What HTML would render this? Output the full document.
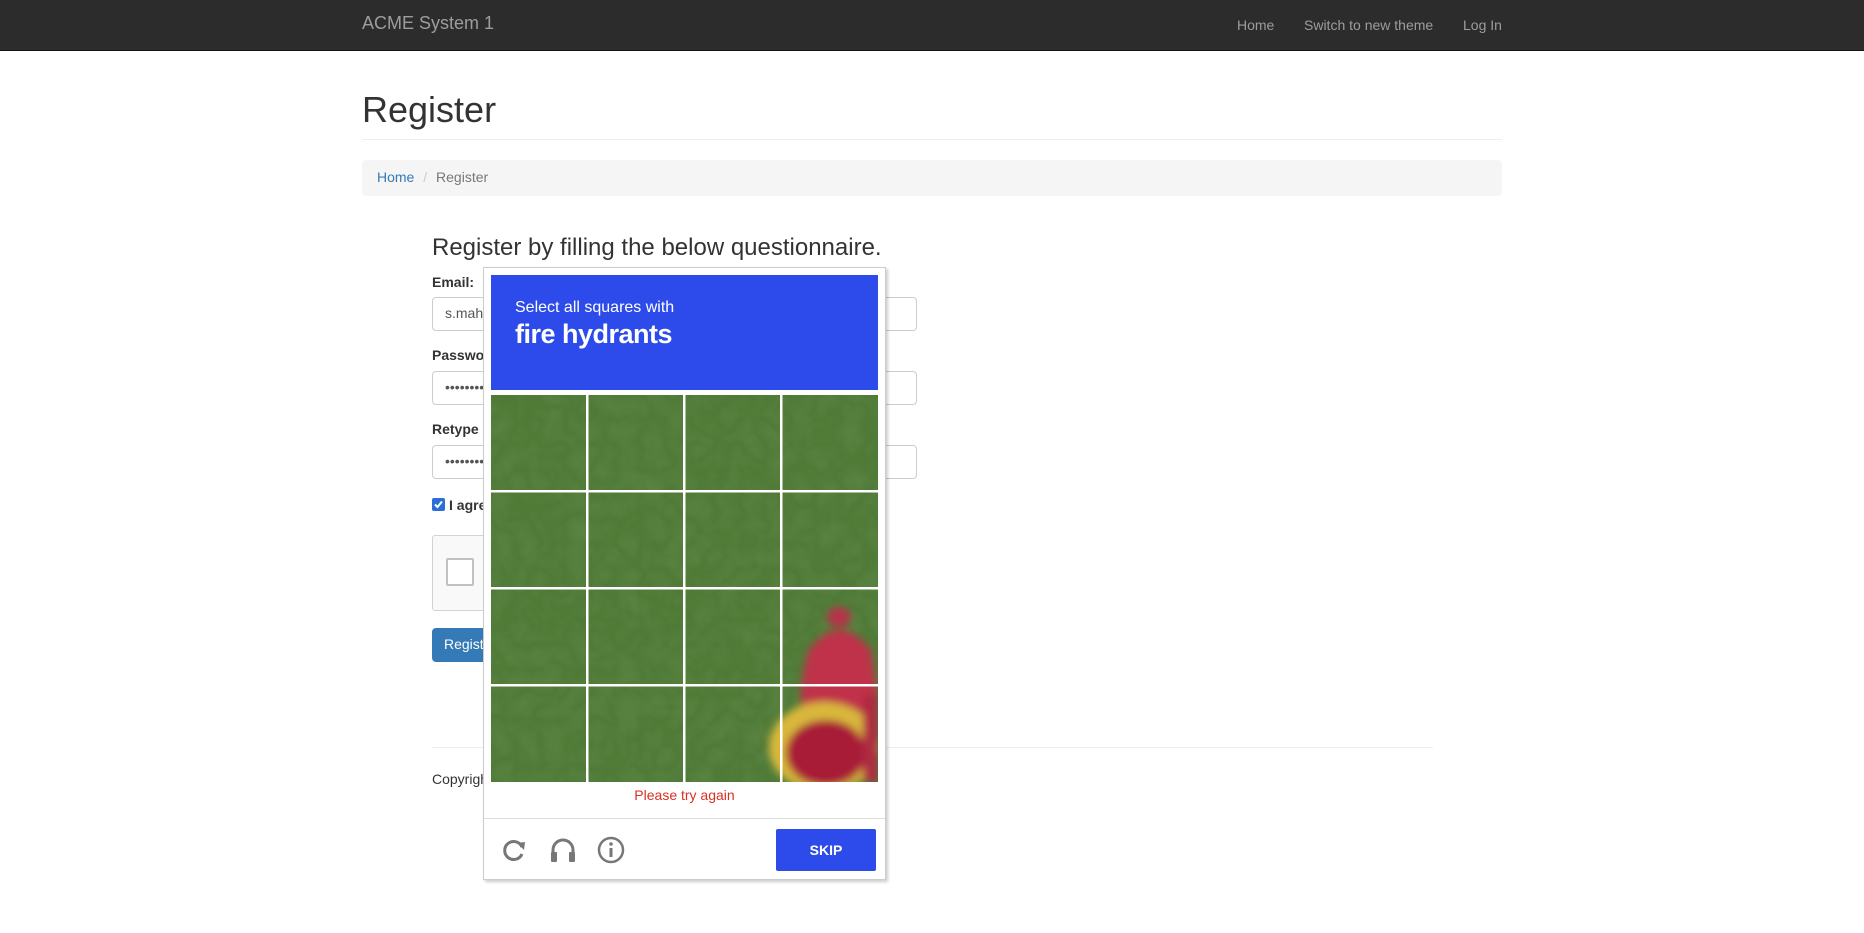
<!DOCTYPE html>
<html><head><meta charset="utf-8"><style>
*{box-sizing:border-box}
body{margin:0;font-family:"Liberation Sans",sans-serif;font-size:14px;color:#333;background:#fff;width:1864px;height:933px;overflow:hidden;position:relative}
.nav{height:51px;background:#2c2c2c;border-bottom:1px solid #111;position:relative}
.brand{position:absolute;left:362px;top:13px;font-size:18px;color:#9d9d9d}
.nl{position:absolute;top:17px;font-size:14px;color:#9d9d9d}
h1{position:absolute;left:362px;top:89px;margin:0;font-size:36px;font-weight:400;color:#333}
.hr1{position:absolute;left:362px;width:1140px;top:139px;border-top:1px solid #eee}
.bc{position:absolute;left:362px;width:1140px;top:160px;height:36px;background:#f5f5f5;border-radius:4px;padding:9px 15px;color:#777}
.bc a{color:#337ab7}
.h3{position:absolute;left:432px;top:234px;font-size:24px;color:#333}
.lbl{position:absolute;left:432px;font-weight:bold}
.inp{position:absolute;left:432px;width:485px;height:34px;border:1px solid #ccc;border-radius:4px;padding:7px 12px;color:#555}
.cb{position:absolute;left:432px;top:498px;width:13px;height:13px;background:#2a6fd6;border-radius:2px}
.rc{position:absolute;left:432px;top:535px;width:304px;height:76px;background:#f9f9f9;border:1px solid #d3d3d3;border-radius:3px}
.rc i{position:absolute;left:13px;top:22px;width:28px;height:28px;border:2px solid #c1c1c1;background:#fff;border-radius:2px}
.btn{position:absolute;left:432px;top:628px;width:90px;height:34px;background:#337ab7;border-radius:4px;color:#fff;padding:8px 12px}
.hr2{position:absolute;left:432px;width:1001px;top:747px;border-top:1px solid #eee}
.copy{position:absolute;left:432px;top:771px}
.pop{position:absolute;left:483px;top:267px;width:403px;height:613px;background:#fff;border:1px solid #ccc;box-shadow:2px 2px 3px rgba(0,0,0,.2)}
.hd{position:absolute;left:7px;top:7px;width:387px;height:115px;background:#2c4bea;color:#fff;padding:24px 24px}
.hd .s{font-size:16px}
.hd .b{font-size:27px;font-weight:bold;margin-top:2px;letter-spacing:-0.5px}
.grid{position:absolute;left:7px;top:127px;width:387px;height:387px}
.err{position:absolute;left:0;width:401px;top:519px;text-align:center;color:#d93025;font-size:14px}
.div{position:absolute;left:0;width:401px;top:550px;border-top:1px solid #ddd}
.skip{position:absolute;left:292px;top:561px;width:100px;height:42px;background:#2c4bea;border-radius:2px;color:#fff;font-weight:bold;text-align:center;line-height:42px;font-size:14px}
</style></head><body>
<div class="nav"><span class="brand">ACME System 1</span>
<span class="nl" style="left:1237px">Home</span><span class="nl" style="left:1304px">Switch to new theme</span><span class="nl" style="left:1463px">Log In</span></div>
<h1>Register</h1>
<div class="hr1"></div>
<div class="bc"><a>Home</a> <span style="color:#ccc;padding:0 5px">/</span> Register</div>
<div class="h3">Register by filling the below questionnaire.</div>
<div class="lbl" style="top:274px">Email:</div>
<div class="inp" style="top:297px">s.mahesh@example.com</div>
<div class="lbl" style="top:347px">Password:</div>
<div class="inp" style="top:371px">••••••••••</div>
<div class="lbl" style="top:421px">Retype Password:</div>
<div class="inp" style="top:445px">••••••••••</div>
<svg class="cb" width="13" height="13" viewBox="0 0 13 13"><path d="M3 6.5 L5.5 9 L10 3.5" fill="none" stroke="#fff" stroke-width="2"/></svg><div class="lbl" style="top:497px;left:449px">I agree to the terms</div>
<div class="rc"><i></i></div>
<div class="btn">Register</div>
<div class="hr2"></div>
<div class="copy">Copyright © ACME</div>
<div class="pop">
<div class="hd"><div class="s">Select all squares with</div><div class="b">fire hydrants</div></div>
<svg class="grid" width="387" height="387" viewBox="0 0 387 387">
<defs><filter id="n"><feTurbulence baseFrequency="0.04" numOctaves="2" seed="3"/><feColorMatrix values="0 0 0 0 0.35  0 0 0 0 0.5  0 0 0 0 0.25  0 0 0 0.18 0"/></filter>
<filter id="bl"><feGaussianBlur stdDeviation="4"/></filter></defs>
<rect width="387" height="387" fill="#4f7a36"/>
<rect width="387" height="387" filter="url(#n)"/>
<g filter="url(#bl)">
<ellipse cx="348" cy="222" rx="12" ry="10" fill="#b83048"/>
<path d="M318 255 Q348 215 380 255 L387 300 L387 325 L310 325 Q308 285 318 255Z" fill="#c0304a"/>
<ellipse cx="333" cy="352" rx="55" ry="45" fill="#d8b83a"/>
<ellipse cx="335" cy="358" rx="40" ry="33" fill="#a81c38"/>
<rect x="372" y="300" width="15" height="87" fill="#b02c42"/>
</g>
<g fill="#fff"><rect x="95" width="2.5" height="387"/><rect x="192" width="2.5" height="387"/><rect x="289" width="2.5" height="387"/>
<rect y="95" width="387" height="2.5"/><rect y="192" width="387" height="2.5"/><rect y="289" width="387" height="2.5"/></g>
</svg>
<div class="err">Please try again</div>
<div class="div"></div>
<svg style="position:absolute;left:15px;top:567px" width="130" height="30" viewBox="0 0 130 30">
<path d="M23 12 A9 9 0 1 0 23 19" fill="none" stroke="#777" stroke-width="3"/><path d="M18 8 L26 7 L25 15Z" fill="#777"/>
<path d="M54 22 V15 A10 10 0 0 1 74 15 V22" fill="none" stroke="#777" stroke-width="3"/><rect x="52" y="17" width="6" height="10" rx="1" fill="#777"/><rect x="70" y="17" width="6" height="10" rx="1" fill="#777"/>
<circle cx="112" cy="15" r="12" fill="none" stroke="#777" stroke-width="2.5"/><rect x="110.5" y="13" width="3" height="9" fill="#777"/><circle cx="112" cy="9" r="1.8" fill="#777"/>
</svg>
<div class="skip">SKIP</div>
</div>
</body></html>
